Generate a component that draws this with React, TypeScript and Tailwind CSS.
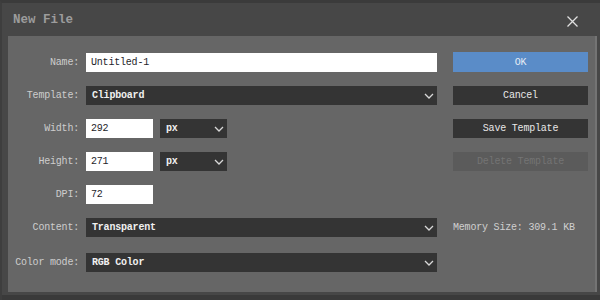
import React from "react";

const mono = { fontFamily: '"Liberation Mono", "DejaVu Sans Mono", monospace' };

function Chevron() {
  return (
    <svg width="10" height="6" viewBox="0 0 10 6" className="shrink-0">
      <path d="M1 1 L5 5 L9 1" fill="none" stroke="#d8d8d8" strokeWidth="1.3" />
    </svg>
  );
}

function Label({ children, className = "" }: { children: React.ReactNode; className?: string }) {
  return (
    <div
      className={`h-[19px] pr-[7px] flex items-center justify-end text-[10px] tracking-[-0.2px] text-[#cdcdcd] ${className}`}
    >
      {children}
    </div>
  );
}

function Select({ value, className }: { value: string; className: string }) {
  return (
    <div
      className={`h-[19px] bg-[#343434] flex items-center justify-between pl-[6px] pr-[3px] text-[10px] tracking-[-0.2px] text-[#f0f0f0] font-bold ${className}`}
    >
      <span>{value}</span>
      <Chevron />
    </div>
  );
}

function Input({ value, className }: { value: string; className: string }) {
  return (
    <div
      className={`h-[19px] bg-white flex items-center pl-[5px] text-[10px] tracking-[-0.2px] text-[#1e1e2a] ${className}`}
    >
      {value}
    </div>
  );
}

function Btn({ children, className }: { children: React.ReactNode; className: string }) {
  return (
    <div
      className={`h-[19px] w-[135px] flex items-center justify-center text-[10px] tracking-[-0.2px] ${className}`}
    >
      {children}
    </div>
  );
}

export default function App() {
  return (
    <div
      style={mono}
      className="w-[600px] h-[300px] bg-[#474747] border-t-[3px] border-t-[#3b3b3b] border-l-[2px] border-l-[#3e3e3e] flex flex-col overflow-hidden"
    >
      <div className="h-[33px] flex items-center justify-between pl-[11px] pr-[22px] shrink-0">
        <span className="text-[12.5px] font-bold text-[#9c9c9c] mt-[1px]">New File</span>
        <svg width="11" height="11" viewBox="0 0 11 11" className="mt-[3px]">
          <path d="M0.5 0.5 L10.5 10.5 M10.5 0.5 L0.5 10.5" stroke="#e0e0e0" strokeWidth="1.3" />
        </svg>
      </div>
      <div className="ml-[6px] w-[589px] h-[256px] bg-[#666666] border-r-[2px] border-r-[#747474] shrink-0 pt-[17px]">
        <div className="grid grid-cols-[78px_367px_135px] grid-rows-[19px_19px_19px_19px_19px_19px_19px] gap-y-[14px]">
          <Label>Name:</Label>
          <Input value="Untitled-1" className="w-[351px]" />
          <Btn className="bg-[#5a8cc8] text-[#e6ecf5] -mt-[1px] h-[20px]">OK</Btn>

          <Label>Template:</Label>
          <Select value="Clipboard" className="w-[351px]" />
          <Btn className="bg-[#343434] text-[#e8e8e8]">Cancel</Btn>

          <Label>Width:</Label>
          <div className="flex gap-[7px]">
            <Input value="292" className="w-[67px]" />
            <Select value="px" className="w-[67px]" />
          </div>
          <Btn className="bg-[#343434] text-[#e8e8e8]">Save Template</Btn>

          <Label>Height:</Label>
          <div className="flex gap-[7px]">
            <Input value="271" className="w-[67px]" />
            <Select value="px" className="w-[67px]" />
          </div>
          <Btn className="bg-[#5b5b5b] text-[#747474]">Delete Template</Btn>

          <Label>DPI:</Label>
          <Input value="72" className="w-[67px]" />
          <div />

          <Label>Content:</Label>
          <Select value="Transparent" className="w-[351px]" />
          <div className="h-[19px] flex items-center text-[10px] tracking-[-0.2px] text-[#d0d0d0]">
            Memory Size: 309.1 KB
          </div>

          <Label className="mt-[2px]">Color mode:</Label>
          <Select value="RGB Color" className="w-[351px] mt-[2px]" />
          <div />
        </div>
      </div>
      <div className="h-[3px] shrink-0" />
      <div className="flex-1 bg-[#3a3a3a]" />
    </div>
  );
}
